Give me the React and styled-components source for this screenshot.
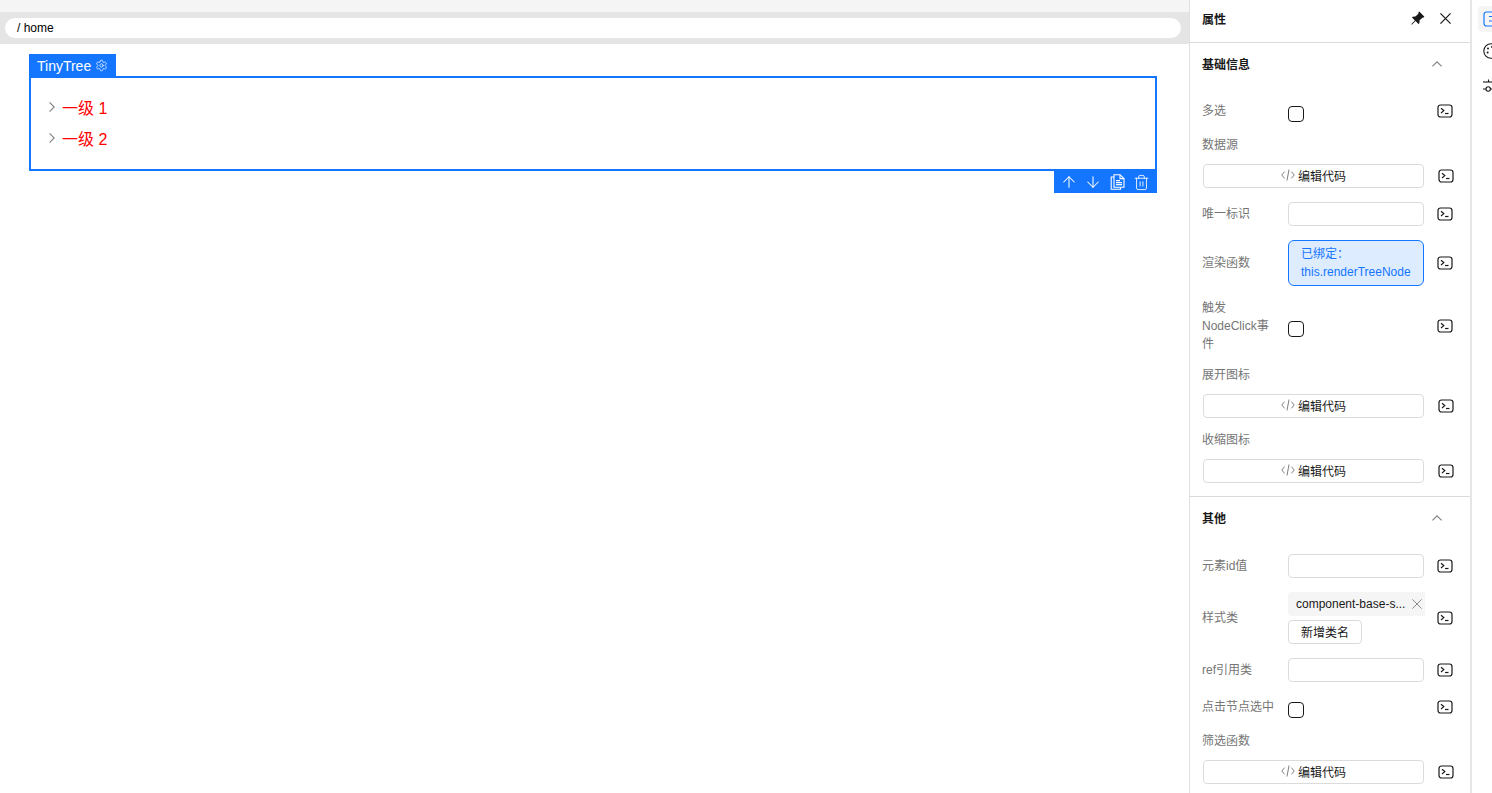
import React from 'react';
import styled, { createGlobalStyle } from 'styled-components';
import { ArrowUp, ArrowDown, Trash2, Settings } from 'lucide-react';
import { BsPinAngleFill } from 'react-icons/bs';

const GlobalStyle = createGlobalStyle`
  html, body {
    margin: 0;
    height: 100%;
    overflow: hidden;
    background: #fff;
  }
  body {
    font-family: "Liberation Sans", "Noto Sans CJK SC", sans-serif;
    font-size: 12px;
    color: #191919;
  }
  * { box-sizing: border-box; }
`;

function TerminalIcon() {
  return (
    <svg width="16" height="14" viewBox="0 0 16 14" fill="none" stroke="#191919" strokeWidth="1.2">
      <rect x="1" y="1" width="14" height="12" rx="2.5" />
      <path d="M4 4.2 L6.8 6.6 L4 9" />
      <path d="M8 9.5 H11.5" />
    </svg>
  );
}

function CodeIcon() {
  return (
    <svg width="14" height="14" viewBox="0 0 14 14" fill="none" stroke="#808080" strokeWidth="1">
      <path d="M3.6 3.6 L0.8 7 L3.6 10.4" />
      <path d="M10.4 3.6 L13.2 7 L10.4 10.4" />
      <path d="M8 1.5 L6 12.5" />
    </svg>
  );
}

function CopyIcon() {
  return (
    <svg width="15" height="16" viewBox="0 0 15 16" fill="none" stroke="#fff" strokeWidth="1.1">
      <path d="M4 .7 H10 L14 4.6 V13.2 H4 Z" />
      <path d="M10 .7 V4.6 H14" />
      <path d="M4 3 H1.2 V15.3 H10.5 V13.2" />
      <path d="M6 6.6 H10 M6 8.6 H12 M6 10.6 H12" />
    </svg>
  );
}

function ConfigTabIcon() {
  return (
    <svg width="16" height="16" viewBox="0 0 16 16" fill="none" stroke="#1476ff" strokeWidth="1.2">
      <rect x="1" y="1" width="14" height="14" rx="2.5" />
      <path d="M6 5.5 H15 M6 10 H15" />
    </svg>
  );
}

function PaletteIcon() {
  return (
    <svg width="16" height="16" viewBox="0 0 16 16" fill="none" stroke="#191919" strokeWidth="1.1">
      <circle cx="8" cy="8" r="7.2" />
      <circle cx="5" cy="5.4" r="1" fill="#191919" stroke="none" />
      <circle cx="9" cy="4" r="1" fill="#191919" stroke="none" />
      <circle cx="4.6" cy="9.4" r="1" fill="#191919" stroke="none" />
    </svg>
  );
}

function SlidersIcon() {
  return (
    <svg width="16" height="14" viewBox="0 0 16 14" fill="none" stroke="#191919" strokeWidth="1.1">
      <path d="M0 3 H16" />
      <path d="M5.5 .5 V3" />
      <path d="M0 10 H3 M7.4 10 H16" />
      <circle cx="5.2" cy="10" r="2.2" />
    </svg>
  );
}

function CollapseIcon() {
  return (
    <svg width="10" height="6" viewBox="0 0 10 6" fill="none" stroke="#808080" strokeWidth="1.1">
      <path d="M.4 5.4 L5 .8 L9.6 5.4" />
    </svg>
  );
}

function ExpandIcon() {
  return (
    <svg width="6" height="10" viewBox="0 0 6 10" fill="none" stroke="#808080" strokeWidth="1.1">
      <path d="M.6 .4 L5.2 5 L.6 9.6" />
    </svg>
  );
}

function CloseIcon({ size, color }) {
  return (
    <svg width={size} height={size} viewBox="0 0 10 10" fill="none" stroke={color} strokeWidth={size > 10 ? 1.1 : 0.9}>
      <path d="M.4 .4 L9.6 9.6 M9.6 .4 L.4 9.6" />
    </svg>
  );
}

function Action() {
  return (
    <ActionCell>
      <TerminalIcon />
    </ActionCell>
  );
}

function CheckboxRow({ label, $mb }) {
  return (
    <Row $mb={$mb}>
      <Label>{label}</Label>
      <Control>
        <Checkbox />
      </Control>
      <Action />
    </Row>
  );
}

function InputRow({ label, $mb }) {
  return (
    <Row $mb={$mb}>
      <Label>{label}</Label>
      <Control>
        <TextInput />
      </Control>
      <Action />
    </Row>
  );
}

function CodeField({ label, $mb }) {
  return (
    <Field $mb={$mb}>
      <FieldLabel>{label}</FieldLabel>
      <Row>
        <CodeButton>
          <CodeIcon />
          编辑代码
        </CodeButton>
        <Action />
      </Row>
    </Field>
  );
}

export default function App() {
  return (
    <Page>
      <GlobalStyle />
      <Canvas>
        <TopStrip />
        <Breadcrumb>
          <Pill>/ home</Pill>
        </Breadcrumb>
        <Stage>
          <Selected>
            <Tag>
              TinyTree
              <Settings size={13} strokeWidth={1.3} />
            </Tag>
            <Tree>
              <TreeRow>
                <ExpandIcon />
                一级 1
              </TreeRow>
              <TreeRow>
                <ExpandIcon />
                一级 2
              </TreeRow>
            </Tree>
            <Toolbar>
              <ToolCell>
                <ArrowUp size={18} strokeWidth={1.4} />
              </ToolCell>
              <ToolCell>
                <ArrowDown size={18} strokeWidth={1.4} />
              </ToolCell>
              <ToolCell>
                <CopyIcon />
              </ToolCell>
              <ToolCell>
                <Trash2 size={17} strokeWidth={1.2} />
              </ToolCell>
            </Toolbar>
          </Selected>
        </Stage>
      </Canvas>

      <Panel>
        <PanelHeader>
          <PanelTitle>属性</PanelTitle>
          <BsPinAngleFill size={15} color="#191919" />
          <CloseIcon size={11} color="#191919" />
        </PanelHeader>

        <Section>
          <SectionHeader>
            <SectionTitle>基础信息</SectionTitle>
            <CollapseIcon />
          </SectionHeader>
          <CheckboxRow label="多选" $mb={13} />
          <CodeField label="数据源" $mb={14} />
          <InputRow label="唯一标识" $mb={14} />
          <Row $mb={13}>
            <Label>渲染函数</Label>
            <Control>
              <Bound>
                已绑定：
                <br />
                this.renderTreeNode
              </Bound>
            </Control>
            <Action />
          </Row>
          <CheckboxRow label="触发NodeClick事件" $mb={12} />
          <CodeField label="展开图标" $mb={12} />
          <CodeField label="收缩图标" $mb={13} />
        </Section>

        <Section>
          <SectionHeader>
            <SectionTitle>其他</SectionTitle>
            <CollapseIcon />
          </SectionHeader>
          <InputRow label="元素id值" $mb={14} />
          <Row $mb={14}>
            <Label>样式类</Label>
            <Control>
              <Chip>
                <ChipText>component-base-s...</ChipText>
                <CloseIcon size={10} color="#808080" />
              </Chip>
              <AddButton>新增类名</AddButton>
            </Control>
            <Action />
          </Row>
          <InputRow label="ref引用类" $mb={14} />
          <CheckboxRow label="点击节点选中" $mb={13} />
          <CodeField label="筛选函数" $mb={13} />
        </Section>
      </Panel>

      <Strip>
        <StripTile $active $h={26}>
          <ConfigTabIcon />
        </StripTile>
        <StripTile $h={34}>
          <PaletteIcon />
        </StripTile>
        <StripTile $h={31}>
          <SlidersIcon />
        </StripTile>
      </Strip>
    </Page>
  );
}

const Page = styled.div`
  display: flex;
  width: 1492px;
  height: 793px;
  overflow: hidden;
`;
const Canvas = styled.div`
  width: 1189px;
  flex: none;
  display: flex;
  flex-direction: column;
`;
const TopStrip = styled.div`
  height: 12px;
  background: #f5f5f5;
`;
const Breadcrumb = styled.div`
  height: 32px;
  padding: 6px 8px 6px 5px;
  background: #e5e5e5;
`;
const Pill = styled.div`
  height: 20px;
  padding-left: 12px;
  border-radius: 10px;
  background: #fff;
  line-height: 20px;
  color: #000;
`;
const Stage = styled.div`
  flex: 1;
  padding: 32px 32px 0 29px;
`;
const Selected = styled.div`
  position: relative;
  height: 95px;
  border: 2px solid #1476ff;
`;
const Tag = styled.div`
  position: absolute;
  left: -2px;
  top: -24px;
  width: 87px;
  height: 22px;
  padding: 1px 0 0 8px;
  display: flex;
  align-items: center;
  gap: 4px;
  background: #1476ff;
  color: #fff;
  font-size: 14px;
`;
const Toolbar = styled.div`
  position: absolute;
  right: -2px;
  top: 93px;
  width: 103px;
  height: 22px;
  padding-left: 3px;
  display: flex;
  align-items: center;
  background: #1476ff;
  color: #fff;
`;
const ToolCell = styled.div`
  width: 24px;
  display: flex;
  justify-content: center;
  align-items: center;
`;
const Tree = styled.div`
  padding: 13px 0 0 18px;
`;
const TreeRow = styled.div`
  height: 31px;
  display: flex;
  align-items: center;
  gap: 7px;
  color: #f00;
  font-size: 16px;
`;
const Panel = styled.div`
  width: 283px;
  flex: none;
  border-left: 1px solid #e0e0e0;
  border-right: 2px solid #e5e5e5;
  overflow: hidden;
`;
const PanelHeader = styled.div`
  height: 43px;
  padding: 0 19px 6px 12px;
  display: flex;
  align-items: center;
  gap: 15px;
  border-bottom: 1px solid #dbdbdb;
`;
const PanelTitle = styled.div`
  flex: 1;
  font-weight: 600;
`;
const Section = styled.div`
  padding: 0 12px;
  border-bottom: 1px solid #dbdbdb;
`;
const SectionHeader = styled.div`
  height: 57px;
  padding: 0 16px 16px 0;
  display: flex;
  align-items: center;
  justify-content: space-between;
`;
const SectionTitle = styled.div`
  font-weight: 700;
`;
const Row = styled.div`
  display: flex;
  align-items: center;
  margin-bottom: ${(p) => (p.$mb ? p.$mb : 0)}px;
`;
const Field = styled.div`
  margin-bottom: ${(p) => (p.$mb ? p.$mb : 0)}px;
`;
const Label = styled.div`
  width: 86px;
  padding-right: 12px;
  flex: none;
  line-height: 18px;
  color: #757575;
`;
const FieldLabel = styled.div`
  line-height: 18px;
  padding-top: 1px;
  margin-bottom: 10px;
  color: #757575;
`;
const Control = styled.div`
  width: 136px;
  flex: none;
  display: flex;
  flex-direction: column;
  align-items: flex-start;
  gap: 4px;
`;
const ActionCell = styled.div`
  width: 29px;
  flex: none;
  display: flex;
  justify-content: flex-end;
  align-items: center;
`;
const Checkbox = styled.span`
  display: block;
  width: 16px;
  height: 16px;
  margin-top: 6px;
  border: 1px solid #191919;
  border-radius: 4px;
  background: #fff;
`;
const TextInput = styled.div`
  width: 136px;
  height: 24px;
  border: 1px solid #dbdbdb;
  border-radius: 4px;
  background: #fff;
`;
const CodeButton = styled.div`
  width: 221px;
  height: 24px;
  margin-left: 1px;
  margin-right: 1px;
  padding-bottom: 2px;
  flex: none;
  display: flex;
  align-items: center;
  justify-content: center;
  gap: 3px;
  border: 1px solid #dbdbdb;
  border-radius: 4px;
  background: #fff;
`;
const Bound = styled.div`
  width: 136px;
  height: 46px;
  padding: 4px 0 0 12px;
  border: 1px solid #1476ff;
  border-radius: 6px;
  background: #deecff;
  color: #1476ff;
  line-height: 18px;
  white-space: nowrap;
`;
const Chip = styled.div`
  width: 137px;
  height: 24px;
  padding: 0 3px 0 8px;
  display: flex;
  align-items: center;
  justify-content: space-between;
  border-radius: 4px 0 0 4px;
  background: #f5f5f5;
`;
const ChipText = styled.span`
  white-space: nowrap;
`;
const AddButton = styled.div`
  width: 74px;
  height: 24px;
  padding-bottom: 2px;
  display: flex;
  align-items: center;
  justify-content: center;
  border: 1px solid #dbdbdb;
  border-radius: 4px;
  background: #fff;
`;
const Strip = styled.div`
  flex: 1;
  min-width: 0;
  padding: 6px 0 0 6px;
  display: flex;
  flex-direction: column;
  gap: 2px;
  overflow: hidden;
`;
const StripTile = styled.div`
  width: 30px;
  height: ${(p) => p.$h}px;
  flex: none;
  padding-left: 5px;
  display: flex;
  align-items: center;
  border-radius: 4px;
  background: ${(p) => (p.$active ? '#f5f5f5' : 'transparent')};
`;
